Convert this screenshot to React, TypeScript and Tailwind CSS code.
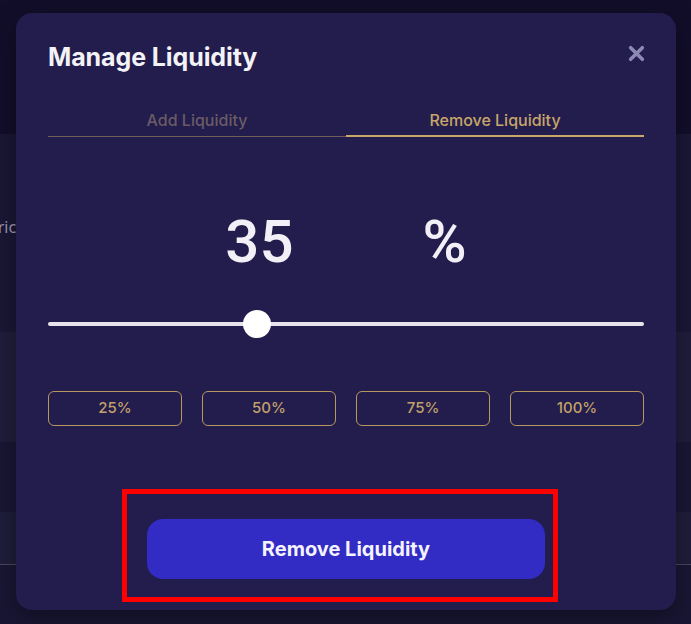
import React, { useState } from "react";

const presets = ["25%", "50%", "75%", "100%"];

const App: React.FC = () => {
  const [tab, setTab] = useState<"add" | "remove">("remove");
  const [value] = useState(35);

  return (
    <div className="relative w-[691px] h-[624px] overflow-hidden bg-[#130f2b] font-['Inter',sans-serif]">
      {/* ===== Page behind the dialog ===== */}
      <div className="flex flex-col">
        <div className="h-[134px] bg-[#120e2a]"></div>
        <div className="h-[198px] bg-[#1a1736] pt-[81px]">
          <span className="block -ml-[12px] text-[16px] leading-6 text-[#9d99b3] font-['Noto_Sans',sans-serif]">
            Pric
          </span>
        </div>
        <div className="h-[110px] bg-[#201d3c]"></div>
        <div className="h-[70px] bg-[#191634]"></div>
        <div className="h-[53px] bg-[#1f1d3a] border-b border-[#48465e]"></div>
        <div className="h-[59px] bg-[#191634]"></div>
      </div>

      {/* ===== Dialog ===== */}
      <div className="absolute left-[16px] top-[13px] w-[660px] h-[597px] rounded-[16px] bg-[#221d4c] px-8 pt-7 shadow-[0_8px_24px_rgba(0,0,0,0.35)]">
        {/* Header */}
        <div className="flex items-center justify-between">
          <h2 className="text-[25px] leading-8 font-bold text-[#f3f2f7] tracking-[-0.1px]">
            Manage Liquidity
          </h2>
          <button className="mr-[-1px] -mt-[8px] text-[#8c8ab5]">
            <svg width="17" height="17" viewBox="0 0 16 16">
              <path
                d="M2.5 2.5 L13.5 13.5 M13.5 2.5 L2.5 13.5"
                stroke="currentColor"
                strokeWidth="3.4"
                strokeLinecap="round"
              />
            </svg>
          </button>
        </div>

        {/* Tabs */}
        <div className="mt-[37px] grid grid-cols-2">
          <button
            onClick={() => setTab("add")}
            className={
              tab === "add"
                ? "pb-[5px] text-[16px] leading-5 font-medium text-[#c8a66a] border-b-2 border-[#c9a86a]"
                : "pb-[6px] text-[16px] leading-5 font-medium text-[#6a5b66] border-b border-[#6e5d58]"
            }
          >
            Add Liquidity
          </button>
          <button
            onClick={() => setTab("remove")}
            className={
              tab === "remove"
                ? "pb-[5px] text-[16px] leading-5 font-medium text-[#c8a66a] border-b-2 border-[#c9a86a]"
                : "pb-[6px] text-[16px] leading-5 font-medium text-[#6a5b66] border-b border-[#6e5d58]"
            }
          >
            Remove Liquidity
          </button>
        </div>

        {/* Amount */}
        <div className="mt-[75px] flex justify-center gap-[129px] text-[60px] leading-none font-medium text-[#f2f0f6] font-['Roboto',sans-serif]">
          <span>{value}</span>
          <span>%</span>
        </div>

        {/* Slider */}
        <div className="mt-[38px] relative h-[28px] flex items-center">
          <div className="w-full h-[4px] rounded-full bg-[#e6e4ea]"></div>
          <div
            className="absolute top-0 w-[28px] h-[28px] -ml-[14px] rounded-full bg-white"
            style={{ left: `${value}%` }}
          ></div>
        </div>

        {/* Presets */}
        <div className="mt-[53px] grid grid-cols-4 gap-5">
          {presets.map((p) => (
            <button
              key={p}
              className="h-[35px] rounded-[6px] border border-[#b8975f] text-[15px] font-medium text-[#c2a16b]"
            >
              {p}
            </button>
          ))}
        </div>

        {/* Action */}
        <div className="mt-[93px] flex justify-center">
          <div className="relative">
            <button className="w-[398px] h-[60px] rounded-[16px] bg-[#322bc4] text-[20px] font-bold text-[#f4f3ff]">
              Remove Liquidity
            </button>
            <div className="absolute -left-[25px] -top-[30px] w-[436px] h-[113px] border-[5px] border-[#ff0000] pointer-events-none"></div>
          </div>
        </div>
      </div>
    </div>
  );
};

export default App;
